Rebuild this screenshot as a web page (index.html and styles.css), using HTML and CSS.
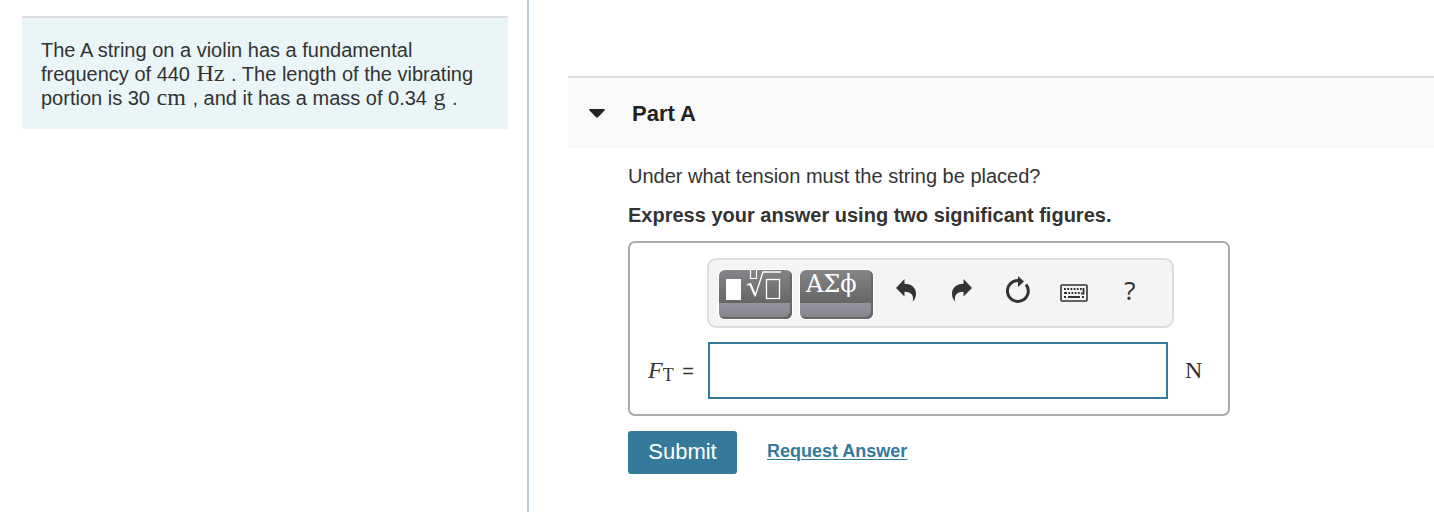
FILE: index.html
```html
<!DOCTYPE html>
<html lang="en">
<head>
    <meta charset="UTF-8">
    <meta name="viewport" content="width=device-width, initial-scale=1.0">
    <title>Part A</title>
    <link rel="stylesheet" href="styles.css">
</head>
<body>
    <div class="page">
        <aside class="sidebar">
            <p class="problem">The A string on a violin has a fundamental frequency of 440 <span class="math">Hz</span> . The length of the vibrating portion is 30 <span class="math">cm</span> , and it has a mass of 0.34 <span class="math">g</span> .</p>
        </aside>
        <main class="content">
            <header class="part-header">
                <svg class="caret" width="16" height="9" viewBox="0 0 16 9"><path d="M1 0h14q1.300 .4 .5 1.500L9.200 8q-1.200 1.200-2.400 0L.5 1.500Q-.3 .4 1 0z" fill="#222"/></svg>
                <h1 class="part-title">Part A</h1>
            </header>
            <form class="question">
                <p class="prompt">Under what tension must the string be placed?</p>
                <p class="prompt hint">Express your answer using two significant figures.</p>
                <div class="answer-box">
                    <div class="toolbar">
                        <button type="button" class="palette" aria-label="Templates">
                            <svg width="73" height="49" viewBox="0 0 73 49" fill="none" stroke="#fff">
                                <rect x="7" y="9" width="15" height="21" fill="#fff" stroke="none"/>
                                <path d="M31.500 0v8.500h6V0" stroke-width="1.200"/>
                                <path d="M28 15.500l3-2" stroke-width="1.300"/>
                                <path d="M31 13.500l5 11.500" stroke-width="2.200"/>
                                <path d="M36 26.500L44 2h18" stroke-width="1.300"/>
                                <rect x="47.500" y="9.500" width="13" height="19" stroke-width="1.300"/>
                            </svg>
                        </button>
                        <button type="button" class="palette symbols">ΑΣϕ</button>
                        <button type="button" class="tool" aria-label="Undo">
                            <svg width="20" height="24" viewBox="0 0 20 24"><path d="M0 10L8.500 1v4.800C16 6 20 10 20 16c0 3-1.300 5.500-3.300 7.500C18 18 16 14 8.500 13.800V18.500z" fill="#333"/></svg>
                        </button>
                        <button type="button" class="tool" aria-label="Redo">
                            <svg width="20" height="24" viewBox="0 0 20 24"><path d="M20 10L11.500 1v4.800C4 6 0 10 0 16c0 3 1.300 5.500 3.300 7.500C2 18 4 14 11.500 13.800V18.500z" fill="#333"/></svg>
                        </button>
                        <button type="button" class="tool" aria-label="Reset">
                            <svg width="24" height="28" viewBox="0 0 24 28"><path d="M12.500 4.600A10.400 10.400 0 1 0 20 8.500" fill="none" stroke="#333" stroke-width="3"/><path d="M12 0l6 5.500-6 5.500z" fill="#333"/></svg>
                        </button>
                        <button type="button" class="tool" aria-label="Keyboard shortcuts">
                            <svg class="keyboard" width="28" height="18" viewBox="0 0 28 18" fill="none" stroke="#333">
                                <rect x="1" y="1" width="26" height="16" rx="1" stroke-width="1.600"/>
                                <path d="M4 5h18" stroke-width="1.800" stroke-dasharray="1.800 1.400"/>
                                <path d="M4 9h3M8.300 9h1.800M11.500 9h1.800M14.700 9h1.800M17.900 9h1.800" stroke-width="1.800"/>
                                <path d="M4 13h2M8 13h12M22 13h2M23.500 4v5.500H21" stroke-width="1.800"/>
                            </svg>
                        </button>
                        <button type="button" class="tool help" aria-label="Help">?</button>
                    </div>
                    <div class="answer-row">
                        <label class="answer-label" for="tension"><span class="math"><i>F</i><span class="sub">T</span></span> <span class="equals">=</span></label>
                        <input class="answer-input" type="text" id="tension">
                        <span class="math unit">N</span>
                    </div>
                </div>
                <div class="actions">
                    <button type="submit" class="submit">Submit</button>
                    <a class="request" href="#">Request Answer</a>
                </div>
            </form>
        </main>
    </div>
</body>
</html>
```
FILE: styles.css
```css
* {
    box-sizing: border-box;
}

body {
    margin: 0;
    font-family: "Liberation Sans", Arial, sans-serif;
    font-size: 20px;
    line-height: 24px;
    color: #333;
    background-color: #fff;
}

h1, p {
    margin: 0;
}

button {
    padding: 0;
    border: none;
    background: none;
    font-family: inherit;
    color: inherit;
    cursor: pointer;
}

svg {
    display: block;
}

.page {
    display: flex;
    min-height: 100vh;
}

.sidebar {
    flex: 0 0 529px;
    padding: 16px 19px 16px 22px;
    border-right: 2px solid #bccbe0;
}

.problem {
    padding: 20px 19px 19px;
    border-top: 2px solid #ddd;
    background-color: #eaf5f7;
}

.math {
    margin: 0 1px;
    font-family: "Liberation Serif", "Times New Roman", serif;
    font-size: 24px;
    line-height: 20px;
}

.content {
    flex: 1;
    padding: 76px 0 0 39px;
}

.part-header {
    display: flex;
    align-items: center;
    gap: 27px;
    height: 72px;
    padding-left: 21px;
    border-top: 2px solid #ddd;
    background-color: #f9f9f9;
}

.part-title {
    padding-top: 2px;
    font-size: 22px;
    color: #222;
}

.question {
    padding: 16px 20px 16px 60px;
}

.prompt {
    margin-bottom: 15px;
}

.hint {
    margin-bottom: 14px;
    font-weight: bold;
}

.answer-box {
    max-width: 602px;
    padding: 15px 16px;
    border: 2px solid #aaa;
    border-radius: 7px;
}

.toolbar {
    display: flex;
    width: 467px;
    height: 70px;
    margin-left: 61px;
    padding: 10px;
    border: 2px solid #ddd;
    border-radius: 9px;
    background-color: #f4f4f4;
}

.palette {
    flex: 0 0 73px;
    height: 49px;
    margin-right: 8px;
    border-radius: 6px;
    background: linear-gradient(#858488, #666 33px, #9692a0 33px, #85838c);
    box-shadow: inset -2px -2px 1px #666, 0 0 0 1px #fff;
    overflow: hidden;
}

.symbols {
    display: flex;
    align-items: flex-start;
    margin-right: 5px;
    padding-left: 6px;
    font-family: "DejaVu Serif", serif;
    font-size: 24px;
    line-height: 28px;
    color: #fff;
}

.tool {
    display: flex;
    flex: 0 0 56px;
    align-items: center;
    justify-content: center;
    height: 40px;
}

.keyboard {
    margin-top: 6px;
}

.help {
    font-family: "Noto Sans", sans-serif;
    font-size: 26px;
}

.answer-row {
    display: flex;
    align-items: center;
    margin-top: 14px;
}

.answer-label {
    flex: 0 0 62px;
    padding: 2px 0 0 1px;
    white-space: nowrap;
}

.sub {
    font-size: 18px;
    vertical-align: -3px;
}

.equals {
    margin-left: 2px;
}

.answer-input {
    flex: 0 1 460px;
    min-width: 0;
    height: 57px;
    padding: 0 12px;
    border: 2px solid #357a9b;
    font-size: 20px;
    color: #333;
}

.unit {
    margin-left: 17px;
    padding-bottom: 2px;
}

.actions {
    display: flex;
    align-items: center;
    gap: 30px;
    margin-top: 15px;
}

.submit {
    width: 109px;
    height: 43px;
    padding-bottom: 2px;
    border-radius: 3px;
    background-color: #357a9b;
    font-size: 22px;
    color: #fff;
}

.request {
    padding-bottom: 4px;
    font-size: 18px;
    font-weight: bold;
    color: #357a9b;
    text-decoration-thickness: 1px;
    text-underline-offset: 2px;
}
```
